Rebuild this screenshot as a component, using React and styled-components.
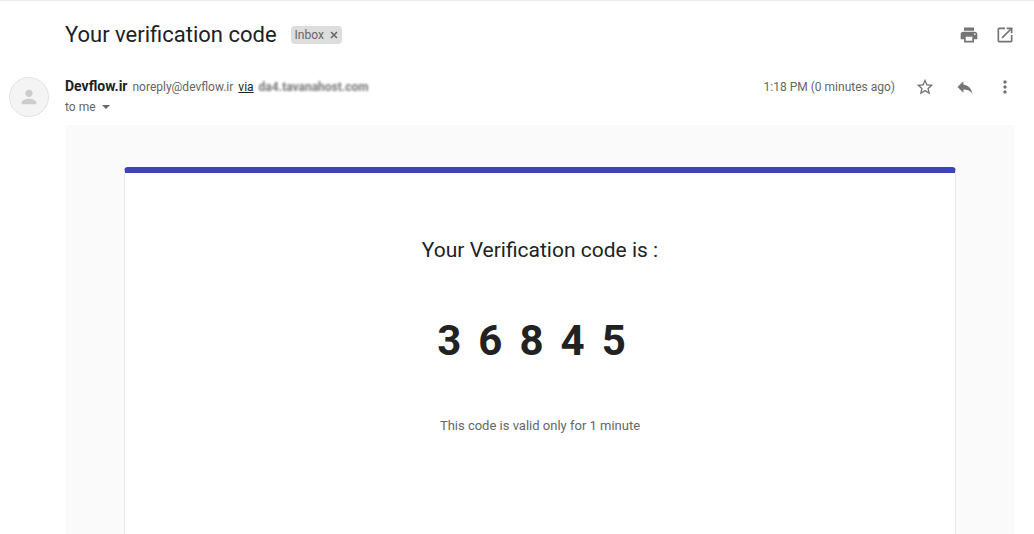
import React from "react";
import styled, { createGlobalStyle } from "styled-components";

const GlobalStyle = createGlobalStyle`
  *, *::before, *::after { box-sizing: border-box; }
  body {
    margin: 0;
    background: #fff;
    color: #666;
    font-family: Roboto, "Liberation Sans", sans-serif;
    font-size: 12px;
    line-height: 20px;
  }
`;

const Page = styled.main`
  display: flex;
  flex-direction: column;
  min-height: 100vh;
  padding-right: 19px;
  border-top: 1px solid #e9edf1;
`;

const SubjectBar = styled.header`
  display: flex;
  align-items: center;
  justify-content: space-between;
  height: 68px;
  padding-left: 65px;
`;

const SubjectGroup = styled.div`
  display: flex;
  align-items: center;
  gap: 14px;
`;

const Subject = styled.h1`
  margin: 0;
  color: #202124;
  font-size: 22px;
  font-weight: 400;
  line-height: 28px;
`;

const Label = styled.span`
  display: flex;
  align-items: center;
  gap: 6px;
  height: 18px;
  padding: 0 4px;
  border-radius: 4px;
  background: #ddd;
  color: #666;
  line-height: 18px;
`;

const LabelRemove = styled.button`
  display: flex;
  padding: 0;
  border: 0;
  background: none;
  color: inherit;
`;

const Actions = styled.div`
  display: flex;
  align-items: center;
  gap: 20px;
  height: 22px;
`;

const IconButton = styled.button`
  display: flex;
  align-items: center;
  justify-content: center;
  width: 20px;
  height: 20px;
  padding: 0;
  border: 0;
  background: none;
  color: #757575;
`;

const ToolButton = styled(IconButton)`
  margin-left: -4px;
`;

const Message = styled.article`
  display: grid;
  grid-template-columns: 65px minmax(0, 1fr);
  grid-template-rows: auto 1fr;
  flex: 1;
`;

const AvatarCell = styled.div`
  padding: 8px 0 0 9px;
`;

const Avatar = styled.div`
  display: flex;
  align-items: center;
  justify-content: center;
  width: 40px;
  height: 40px;
  border: 1px solid #e3e3e3;
  border-radius: 50%;
  background: #f4f4f4;
  color: #ccc;
`;

const MessageHeader = styled.div`
  display: flex;
  align-items: flex-start;
  justify-content: space-between;
  height: 56px;
  padding-top: 7px;
`;

const SenderLine = styled.div`
  display: flex;
  align-items: baseline;
  gap: 5px;
`;

const SenderName = styled.strong`
  color: #202124;
  font-size: 14px;
  font-weight: 700;
`;

const ViaLink = styled.a`
  color: #222;
  text-decoration: underline;
`;

const HiddenHost = styled.span`
  color: #777;
  font-weight: 700;
  filter: blur(1px);
`;

const RecipientButton = styled.button`
  display: flex;
  align-items: center;
  gap: 6px;
  height: 20px;
  padding: 0;
  border: 0;
  background: none;
  color: inherit;
  font: inherit;
`;

const Body = styled.section`
  display: flex;
  grid-column: 2;
  padding: 42px 59px 0;
  background: #fafafa;
`;

const Card = styled.div`
  display: flex;
  flex: 1;
  flex-direction: column;
  align-items: center;
  padding: 61px 20px 0;
  border: 1px solid #e8e8e8;
  border-top: 6px solid #4043b8;
  border-bottom: 0;
  border-radius: 4px 4px 0 0;
  background: #fff;
`;

const CardTitle = styled.h2`
  margin: 0;
  color: #222;
  font-size: 21px;
  font-weight: 400;
  line-height: 32px;
`;

const Code = styled.p`
  display: flex;
  margin: 50px 0;
  color: #222;
  font-size: 42px;
  font-weight: 700;
  line-height: 50px;
`;

const Digit = styled.span`
  margin-right: 17px;
`;

const Note = styled.p`
  margin: 0;
  color: #666;
  font-size: 13px;
  line-height: 20px;
`;

const Icon = ({ d, size = 20 }) => (
  <svg width={size} height={size} viewBox="0 0 24 24" fill="currentColor" aria-hidden="true">
    <path d={d} />
  </svg>
);

const icons = {
  print: "M19 8H5c-1.66 0-3 1.34-3 3v6h4v4h12v-4h4v-6c0-1.66-1.34-3-3-3zm-3 11H8v-5h8v5zm3-7c-.55 0-1-.45-1-1s.45-1 1-1 1 .45 1 1-.45 1-1 1zm-1-9H6v4h12V3z",
  open: "M19 19H5V5h7V3H5c-1.11 0-2 .9-2 2v14c0 1.1.89 2 2 2h14c1.1 0 2-.9 2-2v-7h-2v7zM14 3v2h3.59l-9.83 9.83 1.41 1.41L19 6.41V10h2V3h-7z",
  star: "M22 9.24l-7.19-.62L12 2 9.19 8.63 2 9.24l5.46 4.73L5.82 21 12 17.27 18.18 21l-1.63-7.03L22 9.24zM12 15.4l-3.76 2.27 1-4.28-3.32-2.88 4.38-.38L12 6.1l1.71 4.04 4.38.38-3.32 2.88 1 4.28L12 15.4z",
  reply: "M10 9V5l-7 7 7 7v-4.1c5 0 8.5 1.6 11 5.1-1-5-4-10-11-11z",
  more: "M12 8c1.1 0 2-.9 2-2s-.9-2-2-2-2 .9-2 2 .9 2 2 2zm0 2c-1.1 0-2 .9-2 2s.9 2 2 2 2-.9 2-2-.9-2-2-2zm0 6c-1.1 0-2 .9-2 2s.9 2 2 2 2-.9 2-2-.9-2-2-2z",
  person: "M12 12c2.21 0 4-1.79 4-4s-1.79-4-4-4-4 1.79-4 4 1.79 4 4 4zm0 2c-2.67 0-8 1.34-8 4v2h16v-2c0-2.66-5.33-4-8-4z",
};

export default function App() {
  return (
    <>
      <GlobalStyle />
      <Page>
        <SubjectBar>
          <SubjectGroup>
            <Subject>Your verification code</Subject>
            <Label>
              Inbox
              <LabelRemove type="button" aria-label="Remove label Inbox">
                <svg width="8" height="8" viewBox="0 0 8 8" stroke="currentColor" strokeWidth="1.6" aria-hidden="true">
                  <path d="M1 1l6 6M7 1L1 7" />
                </svg>
              </LabelRemove>
            </Label>
          </SubjectGroup>
          <Actions>
            <IconButton type="button" aria-label="Print all"><Icon d={icons.print} /></IconButton>
            <ToolButton type="button" aria-label="Open in new window"><Icon d={icons.open} /></ToolButton>
          </Actions>
        </SubjectBar>
        <Message>
          <AvatarCell>
            <Avatar><Icon d={icons.person} size={22} /></Avatar>
          </AvatarCell>
          <MessageHeader>
            <div>
              <SenderLine>
                <SenderName>Devflow.ir</SenderName>
                <span>noreply@devflow.ir</span>
                <ViaLink href="#via">via</ViaLink>
                <HiddenHost>da4.tavanahost.com</HiddenHost>
              </SenderLine>
              <RecipientButton type="button">
                to me
                <svg width="8" height="4" viewBox="0 0 8 4" fill="currentColor" aria-hidden="true">
                  <path d="M0 0h8L4 4z" />
                </svg>
              </RecipientButton>
            </div>
            <Actions>
              <time>1:18 PM (0 minutes ago)</time>
              <IconButton type="button" aria-label="Star"><Icon d={icons.star} /></IconButton>
              <IconButton type="button" aria-label="Reply"><Icon d={icons.reply} /></IconButton>
              <IconButton type="button" aria-label="More"><Icon d={icons.more} /></IconButton>
            </Actions>
          </MessageHeader>
          <Body>
            <Card>
              <CardTitle>Your Verification code is :</CardTitle>
              <Code>
                {["3", "6", "8", "4", "5"].map((digit) => <Digit key={digit}>{digit}</Digit>)}
              </Code>
              <Note>This code is valid only for 1 minute</Note>
            </Card>
          </Body>
        </Message>
      </Page>
    </>
  );
}
